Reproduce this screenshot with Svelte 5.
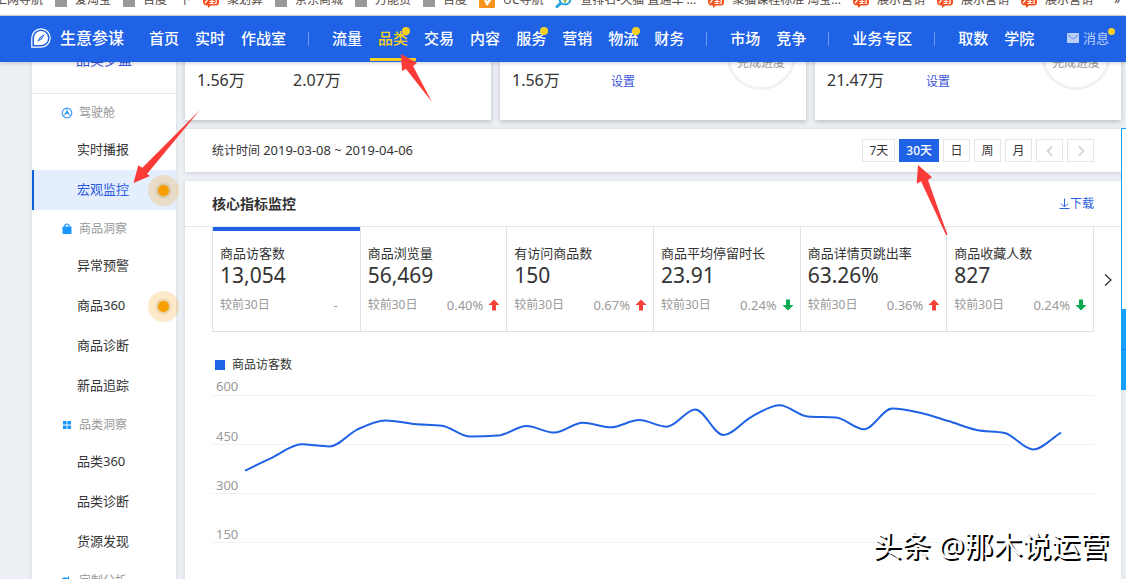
<script>
  const bookmarks = [
    { icon: 'none', text: '上网导航' },
    { icon: 'page', text: '爱淘宝' },
    { icon: 'page', text: '百度一下' },
    { icon: 'tao', text: '聚划算' },
    { icon: 'page', text: '京东商城' },
    { icon: 'page', text: '万能货' },
    { icon: 'page', text: '百度' },
    { icon: 'uc', text: 'UC导航' },
    { icon: 'search', text: '查排名-天猫 直通车 ...' },
    { icon: 'tao', text: '聚猫课程标准 淘宝...' },
    { icon: 'tao', text: '展示营销' },
    { icon: 'tao', text: '展示营销' },
    { icon: 'tao', text: '展示营销' }
  ];

  const navGroups = [
    [{ text: '首页' }, { text: '实时' }, { text: '作战室' }],
    [
      { text: '流量' },
      { text: '品类', dot: true, active: true },
      { text: '交易' },
      { text: '内容' },
      { text: '服务', dot: true },
      { text: '营销' },
      { text: '物流', dot: true },
      { text: '财务' }
    ],
    [{ text: '市场' }, { text: '竞争' }],
    [{ text: '业务专区' }],
    [{ text: '取数' }, { text: '学院' }]
  ];

  const menu = [
    { head: '驾驶舱', icon: 'wheel', items: [{ text: '实时播报' }, { text: '宏观监控', active: true, dot: true }] },
    {
      head: '商品洞察',
      icon: 'bag',
      items: [{ text: '异常预警' }, { text: '商品360', dot: true }, { text: '商品诊断' }, { text: '新品追踪' }]
    },
    { head: '品类洞察', icon: 'grid', items: [{ text: '品类360' }, { text: '品类诊断' }, { text: '货源发现' }] },
    { head: '定制分析', icon: 'gear', items: [] }
  ];

  const goals = [
    { label: '本月支付额', value: '1.56万', label2: '上月支付额', value2: '2.07万' },
    { label: '当月值', value: '1.56万', label2: '目标', ring: true },
    { label: '当月值', value: '21.47万', label2: '目标', ring: true }
  ];

  const metrics = [
    { name: '商品访客数', value: '13,054', change: '-', dir: '' },
    { name: '商品浏览量', value: '56,469', change: '0.40%', dir: 'up' },
    { name: '有访问商品数', value: '150', change: '0.67%', dir: 'up' },
    { name: '商品平均停留时长', value: '23.91', change: '0.24%', dir: 'down' },
    { name: '商品详情页跳出率', value: '63.26%', change: '0.36%', dir: 'up' },
    { name: '商品收藏人数', value: '827', change: '0.24%', dir: 'down' }
  ];

  const ranges = ['7天', '30天', '日', '周', '月'];
  let range = $state('30天');
  let metric = $state(0);

  const ticks = [600, 450, 300, 150];
  const visitors = [
    371, 412, 451, 444, 496, 523, 512, 507, 474, 477, 506, 486, 516, 502, 524, 504, 556, 479, 534, 569, 535, 532, 496,
    559, 546, 521, 494, 485, 435, 486
  ];

  const px = (i) => 33 + (i * 816) / (visitors.length - 1);
  const py = (v) => 1 + (600 - v) * 0.33;

  // Monotone cubic interpolation through the daily values.
  function smooth(values) {
    const p = values.map((v, i) => [px(i), py(v)]);
    const n = p.length;
    const d = [];
    for (let i = 0; i < n - 1; i++) d.push((p[i + 1][1] - p[i][1]) / (p[i + 1][0] - p[i][0]));
    const m = p.map((_, i) => {
      if (i === 0) return d[0];
      if (i === n - 1) return d[n - 2];
      const a = d[i - 1];
      const b = d[i];
      if (a * b <= 0) return 0;
      return Math.sign(a) * Math.min(Math.abs(a), Math.abs(b), Math.abs(a + b) / 4) * 2;
    });
    let path = `M${p[0][0]},${p[0][1]}`;
    for (let i = 0; i < n - 1; i++) {
      const h = (p[i + 1][0] - p[i][0]) / 3;
      path += `C${p[i][0] + h},${p[i][1] + m[i] * h},${p[i + 1][0] - h},${p[i + 1][1] - m[i + 1] * h},${p[i + 1][0]},${p[i + 1][1]}`;
    }
    return path;
  }

  const line = smooth(visitors);
</script>

<div class="bookmarks">
  {#each bookmarks as b}
    <a class="bookmark" href="#bookmark">
      {#if b.icon === 'page'}
        <span class="blank"></span>
      {:else if b.icon === 'tao'}
        <svg width="16" height="16" viewBox="0 0 16 16" aria-hidden="true">
          <path d="M1 1h14a1 1 0 0 1 1 1v8.500q0 3-3 3H8L5 16v-2.500H4q-4 0-4-4V2z" fill="#f4511e" />
          <path d="M2.500 5l1.500 1M2 11l2.500-3M6 4v2M6 7h6.500q1 0 .5 4.500h-1.500M6.500 9.500h5M9 7v4.500M6.500 11.500h4" fill="none" stroke="#fff" stroke-width="1.200" />
        </svg>
      {:else if b.icon === 'uc'}
        <svg width="16" height="16" viewBox="0 0 16 16" aria-hidden="true">
          <rect width="16" height="16" rx="1" fill="#f7931e" />
          <path d="M3 4l5 10 6-8-6 3z" fill="#fff" />
        </svg>
      {:else if b.icon === 'search'}
        <svg width="17" height="16" viewBox="0 0 17 16" aria-hidden="true">
          <circle cx="10" cy="7" r="5.500" fill="#fff" stroke="#27a5dd" stroke-width="2" />
          <path d="M6 11l-5 4.500" stroke="#27a5dd" stroke-width="3" />
          <path d="M7 6l3 3 3-3M10 9v2" stroke="#7cb83c" stroke-width="1.500" fill="none" />
        </svg>
      {/if}
      <span>{b.text}</span>
    </a>
  {/each}
  <span class="more">»</span>
</div>

<header>
  <a class="brand" href="#home">
    <svg width="20" height="20" viewBox="0 0 20 20" aria-hidden="true">
      <path d="M.8 19.200V10A9.200 9.200 0 1 1 10 19.200z" fill="none" stroke="#fff" stroke-width="1.200" />
      <path d="M3 17v-7a7 7 0 1 1 7 7z" fill="#fff" />
      <path d="M14 6l-3 5-5 3 3-5z" fill="#1f62e6" />
      <path d="M8.800 11.200l2.400-2.400" stroke="#fff" stroke-width=".8" />
    </svg>
    <span>生意参谋</span>
  </a>
  <nav>
    {#each navGroups as group, g}
      {#if g > 0}<i class="bar"></i>{/if}
      <div class="group">
        {#each group as item}
          <a href="#nav" class:active={item.active}>
            {item.text}
            {#if item.dot}<i class="dot"></i>{/if}
          </a>
        {/each}
      </div>
    {/each}
  </nav>
  <a class="message" href="#message">
    <svg width="12" height="10" viewBox="0 0 12 10" aria-hidden="true">
      <rect width="12" height="10" rx="1" fill="#b9cff8" />
      <path d="M1 2l5 4 5-4" fill="none" stroke="#5f8eee" stroke-width="1" />
    </svg>
    <span>消息</span>
    <i class="dot"></i>
  </a>
</header>

<div class="page">
  <aside>
    <a class="side-title" href="#compass">品类罗盘</a>
    {#each menu as section}
      <div class="side-head">
        <svg width="12" height="12" viewBox="0 0 12 12" aria-hidden="true">
          {#if section.icon === 'wheel'}
            <circle cx="6" cy="6" r="4.800" fill="none" stroke="#3d9bff" stroke-width="1.200" />
            <path d="M6 1.500V6M6 6L2 9M6 6l4 3M4 6.500L6 4l2 2.500z" fill="#3d9bff" stroke="#3d9bff" />
          {:else if section.icon === 'bag'}
            <path d="M1.500 3.500h9v6.500q0 1-1 1h-7q-1 0-1-1z" fill="#1a96ff" />
            <path d="M3.800 5V3.200a2.200 2.200 0 0 1 4.400 0V5" fill="none" stroke="#1a96ff" stroke-width="1.200" />
          {:else if section.icon === 'grid'}
            <path d="M2 2h3.600v3.600H2zM6.400 2H10v3.600H6.400zM2 6.400h3.600V10H2zM6.400 6.400H10V10H6.400z" fill="#1a96ff" />
          {:else}
            <path d="M2 10a4 4 0 0 1 4-7l2-2v3h3A5 5 0 0 1 2 10z" fill="#1a96ff" />
          {/if}
        </svg>
        <span>{section.head}</span>
      </div>
      {#each section.items as item}
        <a class="side-item" class:active={item.active} href="#menu">
          {item.text}
          {#if item.dot}<i class="pulse"></i>{/if}
        </a>
      {/each}
    {/each}
  </aside>

  <main>
    <div class="goals">
      {#each goals as goal}
        <section class="card goal">
          <div class="col">
            <span class="label">{goal.label}</span>
            <span class="number">{goal.value}</span>
          </div>
          <div class="col second">
            <span class="label">{goal.label2}</span>
            {#if goal.value2}
              <span class="number">{goal.value2}</span>
            {:else}
              <a href="#set">设置</a>
            {/if}
          </div>
          {#if goal.ring}<div class="ring">完成进度</div>{/if}
        </section>
      {/each}
    </div>

    <section class="card period">
      <p>统计时间 <span>2019-03-08 ~ 2019-04-06</span></p>
      <div class="buttons">
        {#each ranges as r}
          <button class:on={range === r} onclick={() => (range = r)}>{r}</button>
        {/each}
        <button aria-label="上一页">
          <svg width="8" height="10" viewBox="0 0 8 10"><path d="M6 0.500L1.500 5 6 9.500" /></svg>
        </button>
        <button aria-label="下一页">
          <svg width="8" height="10" viewBox="0 0 8 10"><path d="M2 0.500L6.500 5 2 9.500" /></svg>
        </button>
      </div>
    </section>

    <section class="card core">
      <div class="core-head">
        <h2>核心指标监控</h2>
        <a href="#download">
          <svg width="11" height="12" viewBox="0 0 11 12" aria-hidden="true">
            <path d="M5.500 0.500v8M2 5.500l3.500 3.500L9 5.500M0.500 10.500h10" fill="none" stroke="#2a62e0" />
          </svg>下载
        </a>
      </div>
      <div class="metric-row">
        <div class="metrics">
          {#each metrics as m, i}
            <button class="metric" class:on={metric === i} onclick={() => (metric = i)}>
              <span class="name">{m.name}</span>
              <span class="value">{m.value}</span>
              <span class="compare">
                <span>较前30日</span>
                <span class="change" class:flat={!m.dir}>{m.change}</span>
                {#if m.dir}
                  <svg class={m.dir} width="12" height="12" viewBox="0 0 12 12" aria-hidden="true">
                    <path d="M6 0.500L11.500 6H8v5.500H4V6H.5z" />
                  </svg>
                {/if}
              </span>
            </button>
          {/each}
        </div>
        <button class="next" aria-label="更多指标">
          <svg width="8" height="12" viewBox="0 0 8 12"><path d="M1 0.500L7 6 1 11.500" /></svg>
        </button>
      </div>
      <div class="legend"><i></i>商品访客数</div>
      <div class="chart">
        {#each ticks as t}
          <div class="tick">{t}</div>
        {/each}
        <svg viewBox="0 0 882 150" preserveAspectRatio="none" aria-hidden="true">
          <path d={line} fill="none" stroke="#1f62e6" stroke-width="2" vector-effect="non-scaling-stroke" />
        </svg>
      </div>
    </section>
  </main>
  <div class="dock"><i></i><b></b><b></b></div>
</div>

<svg class="arrow a1" width="34" height="50" viewBox="0 0 34 50" aria-hidden="true">
  <path d="M2 1L18 10l-4 3L33 49 7 16l-4 2z" />
</svg>
<svg class="arrow a2" width="70" height="76" viewBox="0 0 70 76" aria-hidden="true">
  <path d="M1.500 74L6.300 56.300l4 2.500L68 1 15 65l3 2z" />
</svg>
<svg class="arrow a3" width="34" height="72" viewBox="0 0 34 72" aria-hidden="true">
  <path d="M3 1l14 12.300-4 2.700 19.500 55-1.500 0L6 17.300l-4.300 2.400z" />
</svg>
<div class="watermark">头条 @那木说运营</div>

<style>
  :global(html) {
    height: 100%;
    overflow: hidden;
  }
  :global(body) {
    margin: 0;
    height: 100%;
    overflow: hidden;
    background: #ecf0f5;
    color: #333;
    font: 12px/16px 'Noto Sans', 'Noto Sans CJK SC', sans-serif;
  }
  a {
    color: inherit;
    text-decoration: none;
  }
  button {
    font: inherit;
    color: inherit;
    background: none;
    border: 0;
    padding: 0;
    cursor: pointer;
  }
  svg {
    display: block;
    flex: none;
  }

  .bookmarks {
    display: flex;
    align-items: flex-end;
    gap: 12px;
    height: 16px;
    box-sizing: border-box;
    padding-bottom: 7px;
    overflow: hidden;
    background: #fff;
    border-bottom: 1px solid #d5d5d5;
    color: #554a44;
    white-space: nowrap;
  }
  .bookmark {
    display: flex;
    align-items: center;
    gap: 8px;
    flex: none;
  }
  .bookmark:first-child {
    margin-left: -5px;
  }
  .blank {
    width: 12px;
    height: 14px;
    background: #999;
  }
  .more {
    margin-left: auto;
    padding-right: 6px;
  }

  header {
    position: relative;
    z-index: 2;
    display: flex;
    align-items: center;
    height: 46px;
    box-sizing: border-box;
    padding: 0 17px 0 31px;
    background: #1f62e6;
    color: #fff;
    font-size: 15px;
    line-height: 20px;
    font-weight: 500;
    box-shadow: 0 1px 4px rgba(0, 0, 0, 0.2);
    white-space: nowrap;
  }
  .brand {
    display: flex;
    align-items: center;
    gap: 9px;
    font-size: 16px;
    margin-right: 25px;
    padding-bottom: 2px;
  }
  nav {
    display: flex;
    align-items: center;
    flex: 1;
    height: 100%;
  }
  .group {
    display: flex;
    gap: 16px;
    height: 100%;
  }
  .group a {
    position: relative;
    display: flex;
    align-items: center;
    height: 100%;
    box-sizing: border-box;
    padding-bottom: 2px;
  }
  .group a.active {
    color: #f5d020;
  }
  .group a.active::after {
    content: '';
    position: absolute;
    left: -8px;
    right: -8px;
    bottom: 1px;
    height: 3px;
    background: #f5d020;
  }
  .bar {
    width: 1px;
    height: 14px;
    margin: 0 23px 0 22px;
    background: #6c98ef;
  }
  .dot {
    position: absolute;
    top: 11px;
    right: -2px;
    width: 8px;
    height: 8px;
    border-radius: 50%;
    background: #f5d020;
  }
  .message {
    position: relative;
    display: flex;
    align-items: center;
    gap: 4px;
    padding-bottom: 2px;
    color: #b9cff8;
    font-size: 13px;
    font-weight: 400;
  }
  .message .dot {
    top: 0;
    right: -6px;
    width: 7px;
    height: 7px;
  }

  .page {
    display: flex;
    margin-top: -30px;
    padding-left: 32px;
  }
  aside {
    width: 144px;
    flex: none;
    background: #fff;
    box-shadow: 0 0 4px rgba(0, 0, 0, 0.1);
    position: relative;
  }
  .side-title {
    display: flex;
    align-items: center;
    height: 62px;
    box-sizing: border-box;
    padding: 0 0 6px 44px;
    border-bottom: 1px solid #e6e8ec;
    font-size: 14px;
    color: #3a55d8;
  }
  .side-head {
    display: flex;
    align-items: center;
    gap: 6px;
    height: 36px;
    box-sizing: border-box;
    padding: 2px 0 0 29px;
    color: #999;
  }
  .side-item {
    position: relative;
    display: flex;
    align-items: center;
    height: 40px;
    box-sizing: border-box;
    padding: 0 0 2px 45px;
    font-size: 13px;
  }
  .side-item.active {
    background: #e5eefd;
    color: #2a5ae0;
    box-shadow: inset 2px 0 #0d5fe0;
  }
  .pulse {
    position: absolute;
    right: -3px;
    top: 5px;
    width: 31px;
    height: 31px;
    border-radius: 50%;
    background: radial-gradient(circle, #f5a000 5px, rgba(190, 120, 0, 0.35) 6px, rgba(245, 165, 30, 0.24) 9px);
  }

  main {
    flex: 1;
    min-width: 0;
    display: flex;
    flex-direction: column;
    gap: 9px;
    margin-left: 9px;
  }
  .card {
    background: #fff;
    box-shadow: 0 1px 4px rgba(0, 0, 0, 0.14);
  }
  .goals {
    display: grid;
    grid-template-columns: repeat(3, 1fr);
    gap: 9px;
  }
  .goal {
    position: relative;
    display: flex;
    height: 88px;
    box-sizing: border-box;
    padding: 16px 12px 0;
    box-shadow: 0 2px 5px rgba(0, 0, 0, 0.2);
  }
  .col {
    display: flex;
    flex-direction: column;
    gap: 4px;
    width: 96px;
  }
  .label {
    color: #888;
  }
  .number {
    font-size: 16px;
    line-height: 24px;
  }
  .col a {
    padding-left: 3px;
    line-height: 28px;
    color: #3a55d8;
  }
  .ring {
    position: absolute;
    right: 10px;
    bottom: 30px;
    display: flex;
    align-items: center;
    justify-content: center;
    width: 70px;
    height: 70px;
    box-sizing: border-box;
    padding-top: 16px;
    border: 3px solid #f1f1f1;
    border-radius: 50%;
    color: #999;
    white-space: nowrap;
  }

  .period {
    display: flex;
    align-items: center;
    justify-content: space-between;
    height: 43px;
    padding: 0 27px;
  }
  .period p {
    margin: 0;
  }
  .period p span {
    font-size: 13px;
  }
  .buttons {
    display: flex;
    gap: 4px;
  }
  .buttons button {
    display: flex;
    align-items: center;
    justify-content: center;
    height: 23px;
    padding: 0 6px;
    min-width: 27px;
    border: 1px solid #e3e5e8;
  }
  .buttons button.on {
    background: #1f62e6;
    border-color: #1f62e6;
    color: #fff;
    font-weight: 500;
  }
  .buttons path {
    fill: none;
    stroke: #ccc;
    stroke-width: 1.5;
  }

  .core {
    padding-bottom: 64px;
  }
  .core-head {
    display: flex;
    align-items: center;
    justify-content: space-between;
    height: 45px;
    padding: 0 27px;
    border-bottom: 1px solid #e3e6ea;
  }
  .core-head h2 {
    margin: 0;
    font-size: 14px;
    font-weight: 700;
  }
  .core-head a {
    display: flex;
    align-items: center;
    color: #2a62e0;
  }
  .metric-row {
    display: flex;
    padding-left: 27px;
  }
  .metrics {
    flex: 1;
    display: grid;
    grid-template-columns: repeat(6, 1fr);
    border: 1px solid #dae3eb;
    border-top: 0;
  }
  .metric {
    display: flex;
    flex-direction: column;
    height: 104px;
    padding: 18px 6px 0 7px;
    border-left: 1px solid #dae3eb;
    text-align: left;
  }
  .metric:first-child {
    border-left: 0;
  }
  .metric.on {
    box-shadow: inset 0 4px #1f62e6;
  }
  .name {
    font-size: 13px;
    white-space: nowrap;
  }
  .value {
    font-size: 21px;
    line-height: 28px;
  }
  .compare {
    display: flex;
    align-items: center;
    gap: 5px;
    margin-top: 8px;
    color: #999;
  }
  .change {
    margin-left: auto;
    font-size: 13px;
  }
  .change.flat {
    margin-right: 16px;
  }
  .up {
    fill: #f5413a;
  }
  .down {
    fill: #0aa94f;
    transform: rotate(180deg);
  }
  .next {
    width: 27px;
    display: flex;
    align-items: center;
    justify-content: center;
  }
  .next path {
    fill: none;
    stroke: #333;
    stroke-width: 1.3;
  }
  .legend {
    display: flex;
    align-items: center;
    gap: 7px;
    padding: 25px 0 0 30px;
  }
  .legend i {
    width: 10px;
    height: 10px;
    background: #1f62e6;
  }
  .chart {
    position: relative;
    margin: 0 27px;
  }
  .tick {
    height: 49px;
    box-sizing: border-box;
    padding: 32px 0 0 4px;
    border-bottom: 1px solid #f0f2f8;
    font-size: 13px;
    line-height: 16px;
    color: #999;
  }
  .tick:first-child {
    height: 23px;
    padding-top: 5px;
  }
  .chart svg {
    position: absolute;
    left: 0;
    top: 21px;
    width: 100%;
    height: 150px;
  }

  .dock {
    width: 5px;
    flex: none;
    display: flex;
    flex-direction: column;
    margin-top: 96px;
  }
  .dock i {
    height: 180px;
    background: #fff;
    border: solid #14a0ff;
    border-width: 1px 0 0 1px;
  }
  .dock b {
    height: 40px;
    background: #14a0ff;
    border-bottom: 1px solid #0b84e0;
  }
  .dock b:last-child {
    border-bottom: 0;
  }

  .arrow {
    position: absolute;
    z-index: 3;
    fill: #fb3b38;
  }
  .a1 {
    left: 399px;
    top: 53px;
  }
  .a2 {
    left: 132px;
    top: 109px;
  }
  .a3 {
    left: 915px;
    top: 164px;
  }
  .watermark {
    position: absolute;
    z-index: 3;
    right: 17px;
    bottom: 15px;
    font-size: 29px;
    line-height: 36px;
    color: #fff;
    text-shadow: 2px 2px 0 #000;
    white-space: nowrap;
  }
</style>
